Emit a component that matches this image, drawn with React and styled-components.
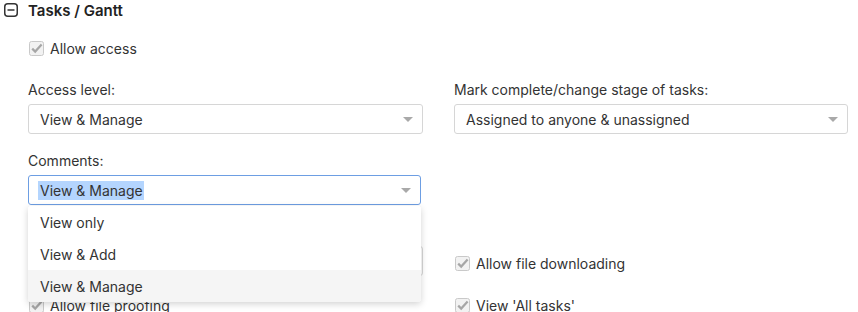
import styled, { createGlobalStyle } from "styled-components";

const GlobalStyle = createGlobalStyle`
  body {
    margin: 0;
    background: #fff;
    font-family: Inter, "Liberation Sans", Arial, sans-serif;
    color: #333;
  }
`;

const MinusBoxIcon = () => (
  <svg width="14" height="14" viewBox="0 0 14 14">
    <rect x="0.75" y="0.75" width="12.5" height="12.5" rx="3" fill="none" stroke="#333" strokeWidth="1.5" />
    <line x1="3.5" y1="7" x2="10.5" y2="7" stroke="#333" strokeWidth="1.5" />
  </svg>
);

const CheckIcon = () => (
  <svg width="15" height="15" viewBox="0 0 15 15">
    <rect x="0.5" y="0.5" width="14" height="14" rx="2" fill="#f2f2f2" stroke="#c9c9c9" />
    <path d="M3.2 7.6 L6.2 10.6 L12.6 3.6" fill="none" stroke="#a6a6a6" strokeWidth="2.2" />
  </svg>
);

const Arrow = () => (
  <svg width="10" height="5" viewBox="0 0 10 5">
    <path d="M0 0 L10 0 L5 5 Z" fill="#a9a9a9" />
  </svg>
);

const Page = styled.div`
  width: 858px;
  height: 312px;
  overflow: hidden;
  position: relative;
`;

const Header = styled.div`
  display: flex;
  align-items: center;
  gap: 10px;
  padding: 1px 0 0 4px;
  height: 18px;
  font-size: 15px;
  font-weight: 600;
  color: #222;
`;

const Body = styled.div`
  padding-left: 28px;
`;

const CheckRow = styled.label`
  display: flex;
  align-items: center;
  gap: 6px;
  font-size: 14px;
  line-height: 17px;
  color: #333;
  padding-left: ${(p) => p.$indent || 0}px;
  margin-top: ${(p) => p.$top || 0}px;
  align-self: ${(p) => p.$align || "auto"};
  margin-bottom: ${(p) => p.$bottom || 0}px;
`;

const Grid = styled.div`
  display: grid;
  grid-template-columns: 395px 394px;
  column-gap: 31px;
  row-gap: 18px;
  margin-top: 24px;
`;

const Field = styled.div`
  display: flex;
  flex-direction: column;
  gap: 6px;
  position: relative;
`;

const Label = styled.div`
  font-size: 14px;
  line-height: 17px;
  min-height: 17px;
  color: #333;
`;

const Select = styled.div`
  box-sizing: border-box;
  height: 30px;
  width: ${(p) => (p.$focused ? "393px" : "100%")};
  display: flex;
  align-items: center;
  justify-content: space-between;
  padding: 0 9px 0 11px;
  border: 1px solid ${(p) => (p.$focused ? "#6d9ee3" : "#d6d6d6")};
  border-radius: 3px;
  font-size: 14px;
  color: #333;
  background: #fff;
`;

const Highlight = styled.span`
  background: #b4d5fe;
  margin-left: -2px;
  padding: 1px 1px 1px 2px;
`;

const Menu = styled.div`
  position: absolute;
  left: 0;
  top: 54px;
  width: 393px;
  background: #fff;
  border-radius: 3px;
  box-shadow: 0 2px 7px rgba(0, 0, 0, 0.18);
  z-index: 5;
  overflow: hidden;
`;

const MenuItem = styled.div`
  height: 32px;
  display: flex;
  align-items: center;
  padding-left: 12px;
  font-size: 14px;
  color: #333;
  background: ${(p) => (p.$active ? "#f5f5f5" : "#fff")};
`;

const App = () => {
  return (
    <Page>
      <GlobalStyle />
      <Header>
        <MinusBoxIcon />
        <span>Tasks / Gantt</span>
      </Header>
      <Body>
        <CheckRow $indent={1} $top={21}>
          <CheckIcon />
          Allow access
        </CheckRow>
        <Grid>
          <Field>
            <Label>Access level:</Label>
            <Select>
              View &amp; Manage
              <Arrow />
            </Select>
          </Field>
          <Field>
            <Label>Mark complete/change stage of tasks:</Label>
            <Select>
              Assigned to anyone &amp; unassigned
              <Arrow />
            </Select>
          </Field>
          <Field>
            <Label>Comments:</Label>
            <Select $focused>
              <Highlight>View &amp; Manage</Highlight>
              <Arrow />
            </Select>
            <Menu>
              <MenuItem>View only</MenuItem>
              <MenuItem>View &amp; Add</MenuItem>
              <MenuItem $active>View &amp; Manage</MenuItem>
            </Menu>
          </Field>
          <div />
          <Field>
            <Label />
            <Select>
              <Arrow />
            </Select>
          </Field>
          <CheckRow $indent={1} $align="end" $bottom={4}>
            <CheckIcon />
            Allow file downloading
          </CheckRow>
          <CheckRow $indent={1} $top={3}>
            <CheckIcon />
            Allow file proofing
          </CheckRow>
          <CheckRow $indent={1} $top={3}>
            <CheckIcon />
            View 'All tasks'
          </CheckRow>
        </Grid>
      </Body>
    </Page>
  );
};

export default App;
